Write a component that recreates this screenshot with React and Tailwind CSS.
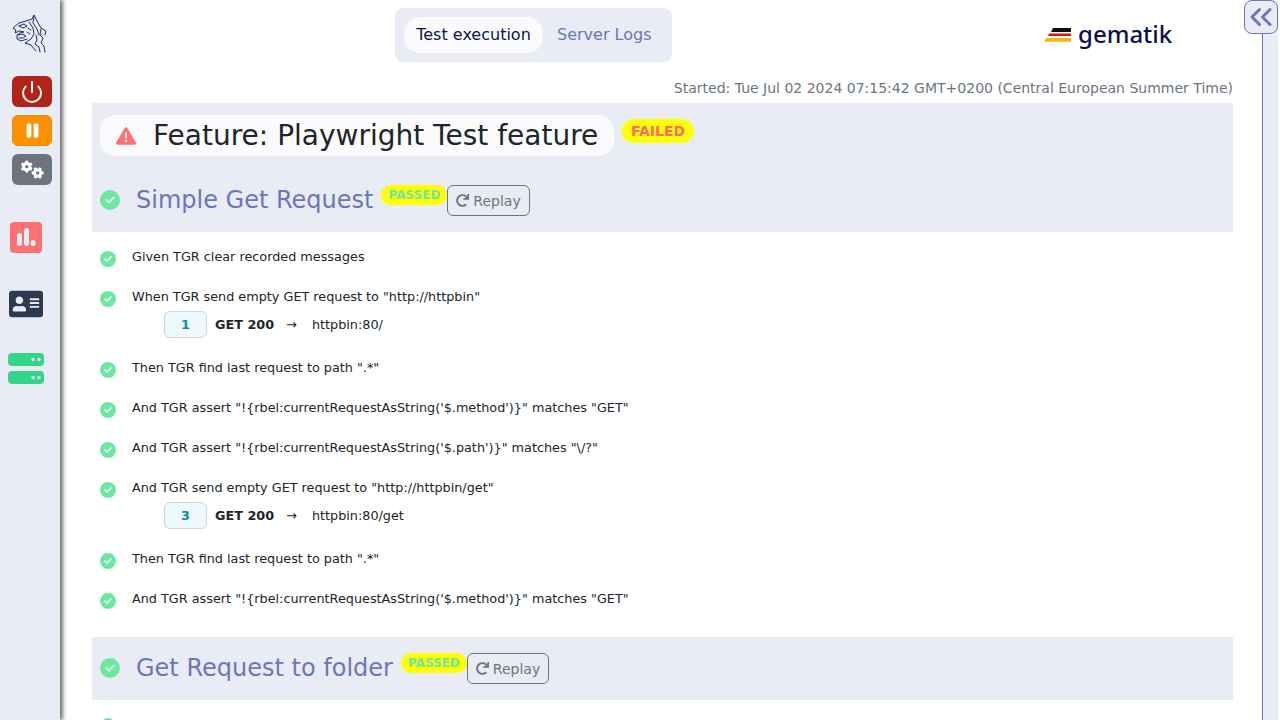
import { FaRedo, FaAddressCard } from 'react-icons/fa';
import { FaCircleCheck, FaTriangleExclamation, FaPause, FaGears } from 'react-icons/fa6';
import { Power, ChevronsLeft } from 'lucide-react';

const steps = [
  { text: 'Given TGR clear recorded messages' },
  { text: 'When TGR send empty GET request to "http://httpbin"', msg: { id: 1, path: 'httpbin:80/' } },
  { text: 'Then TGR find last request to path ".*"' },
  { text: 'And TGR assert "!{rbel:currentRequestAsString(\'$.method\')}" matches "GET"' },
  { text: 'And TGR assert "!{rbel:currentRequestAsString(\'$.path\')}" matches "\\/?"' },
  { text: 'And TGR send empty GET request to "http://httpbin/get"', msg: { id: 3, path: 'httpbin:80/get' } },
  { text: 'Then TGR find last request to path ".*"' },
  { text: 'And TGR assert "!{rbel:currentRequestAsString(\'$.method\')}" matches "GET"' },
];

// hand drawn tiger head
const TigerLogo = () => (
  <svg width="34" height="38" viewBox="0 0 34 38" fill="none" stroke="#1f2f66" strokeWidth="1" strokeLinecap="round" strokeLinejoin="round">
    <path d="M0 13 L6 8 L13 6 L19 4 L21 0 L24 6 L28 13 L33 16 L32 20" />
    <path d="M0 13 L3 15 L2 18 L6 16 L11 17 L7 18 L4 20 L4 24 L8 26 L14 24" />
    <path d="M6 11 L11 9 L14 11 L10 13 L6 11" />
    <path d="M21 1 L20 8 L24 14 L26 20" />
    <path d="M16 7 L20 13 L21 19 L18 24 L12 28 L18 30 L23 36" />
    <path d="M5 20 L9 19 L13 21 L10 23 L6 23" />
    <path d="M28 14 L27 20 L30 23 L28 28 L31 31 L32 37" />
    <path d="M23 20 L24 25 L22 29 L26 32 L27 37" />
    <path d="M15 13 L18 15 M14 17 L17 19" />
  </svg>
);

const StatsIcon = () => (
  <svg width="32" height="31" viewBox="0 0 32 31">
    <rect width="32" height="31" rx="4" fill="#ff7070" />
    <rect x="7" y="11" width="5" height="13" rx="2.5" fill="#e9ebf5" />
    <rect x="14" y="6" width="5" height="18" rx="2.5" fill="#e9ebf5" />
    <rect x="20.5" y="18" width="5" height="6" rx="2.5" fill="#e9ebf5" />
  </svg>
);

const ServerBar = () => (
  <svg width="36" height="13" viewBox="0 0 36 13">
    <rect width="36" height="13" rx="4" fill="#34d58a" />
    <circle cx="25" cy="6.5" r="1.7" fill="#e9ebf5" />
    <circle cx="31" cy="6.5" r="1.7" fill="#e9ebf5" />
  </svg>
);

const Sidebar = () => (
  <div className="w-[60px] h-full shrink-0 bg-[#e9ebf5] flex flex-col items-start shadow-[3px_0_4px_rgba(0,0,0,0.55)] z-10">
    <div className="mt-[15px] ml-[13px] h-[38px]"><TigerLogo /></div>
    <button className="mt-[23px] ml-3 w-10 h-[31px] rounded-md bg-[#b22318] text-white flex items-center justify-center"><Power size={24} strokeWidth={2} /></button>
    <button className="mt-2 ml-3 w-10 h-[31px] rounded-md bg-[#ff9100] border border-[#f08a00] text-white flex items-center justify-center"><FaPause size={19} /></button>
    <button className="mt-2 ml-3 w-10 h-[31px] rounded-md bg-[#6c757d] text-white flex items-center justify-center"><FaGears size={23} /></button>
    <div className="mt-[37px] ml-[10px]"><StatsIcon /></div>
    <FaAddressCard size={34} color="#2e3a52" className="mt-[34px] ml-[9px]" />
    <div className="mt-[32px] ml-2 flex flex-col gap-[5px]">
      <ServerBar />
      <ServerBar />
    </div>
  </div>
);

const GematikLogo = () => (
  <div className="h-8 flex items-center gap-[7px]">
    <svg width="27" height="14" viewBox="0 0 27 14">
      <path d="M9 0 H27 V4 H7 Z" fill="#111" />
      <path d="M5 5.5 H27 V8 H4 Z" fill="#d8121b" />
      <path d="M2 10 H27 V13.7 H0 Z" fill="#f5b80f" />
    </svg>
    <span className="font-['Noto_Sans',sans-serif] font-medium text-2xl leading-none text-[#0a1350] -mt-[3px]">gematik</span>
  </div>
);

const Replay = () => (
  <button className="h-[31px] px-2 rounded-md border border-[#6c757d] text-[#6c757d] text-sm flex items-center gap-1">
    <FaRedo size={13} />Replay
  </button>
);

const ScenarioHeader = ({ title }) => (
  <div className="h-[63px] pl-2 flex items-center bg-[#e9ebf5]">
    <FaCircleCheck size={20} color="#6ee7a0" className="-mt-px" />
    <h2 className="ml-4 -mt-px text-2xl text-[#6b77bb]">{title}</h2>
    <span className="ml-2 -mt-3 h-5 px-[7px] rounded-full bg-[#ffff00] text-xs font-bold leading-5 text-[#6ee7a0]">PASSED</span>
    <Replay />
  </div>
);

const Step = ({ step }) => (
  <div className="flex items-start">
    <FaCircleCheck size={16} color="#6ee7a0" className="mt-1 shrink-0" />
    <div className="ml-4 text-[12.8px] leading-5 text-[#212529]">
      <div>{step.text}</div>
      {step.msg && (
        <div className="mt-1 ml-8 flex items-center h-[27px]">
          <span className="w-[43px] h-[27px] rounded-md border border-[#c9d6dc] bg-[#ecf9fd] text-[#0e8a9e] font-bold text-center leading-[25px]">{step.msg.id}</span>
          <span className="ml-2 font-bold">GET 200</span>
          <span className="ml-3">→</span>
          <span className="ml-[15px]">{step.msg.path}</span>
        </div>
      )}
    </div>
  </div>
);

export default function App() {
  return (
    <div className="w-[1280px] h-[720px] overflow-hidden relative flex bg-white font-['DejaVu_Sans',sans-serif]">
      <Sidebar />
      <div className="w-[1141px] ml-8 shrink-0">
        <div className="h-[70px] flex items-start">
          <div className="ml-[303px] mt-2 w-[277px] h-[54px] rounded-lg bg-[#e9ebf5] flex items-center pl-[9px]">
            <div className="h-9 w-[139px] rounded-2xl bg-[#fbfbfd] text-[#0a1350] flex items-center justify-center">Test execution</div>
            <div className="ml-[14px] text-[#6b77bb]">Server Logs</div>
          </div>
          <div className="ml-[372px] mt-[19px]"><GematikLogo /></div>
        </div>
        <div className="h-[33px] pt-2 text-right text-sm leading-5 text-[#6c757d]">Started: Tue Jul 02 2024 07:15:42 GMT+0200 (Central European Summer Time)</div>
        <div className="bg-[#e9ebf5] pt-3">
          <div className="pl-2 flex items-start">
            <div className="w-[514px] h-[41px] rounded-2xl bg-[#fbfbfd] flex items-center pl-4">
              <FaTriangleExclamation size={20} color="#ff7070" />
              <h1 className="ml-[17px] text-[28px] text-[#212529]">Feature: Playwright Test feature</h1>
            </div>
            <span className="ml-2 mt-1 h-6 px-[9px] rounded-full bg-[#ffff00] text-sm font-bold leading-6 text-[#ff6b6b]">FAILED</span>
          </div>
          <div className="pt-[13px]"><ScenarioHeader title="Simple Get Request" /></div>
        </div>
        <div className="pt-[15px] pb-7 pl-2 flex flex-col gap-5">
          {steps.map((s, i) => <Step key={i} step={s} />)}
        </div>
        <ScenarioHeader title="Get Request to folder" />
        <div className="pt-[18px] pl-2"><FaCircleCheck size={16} color="#6ee7a0" /></div>
      </div>
      <div className="ml-[29px] w-4 h-full border-l border-[#6b77bb] bg-[#e9ebf5]" />
      <button className="absolute top-0 left-[1244px] w-[34px] h-[34px] rounded-lg border border-[#6b77bb] bg-[#e9ebf5] text-[#6b77bb] flex items-center justify-center">
        <ChevronsLeft size={36} strokeWidth={2} className="shrink-0" />
      </button>
    </div>
  );
}
